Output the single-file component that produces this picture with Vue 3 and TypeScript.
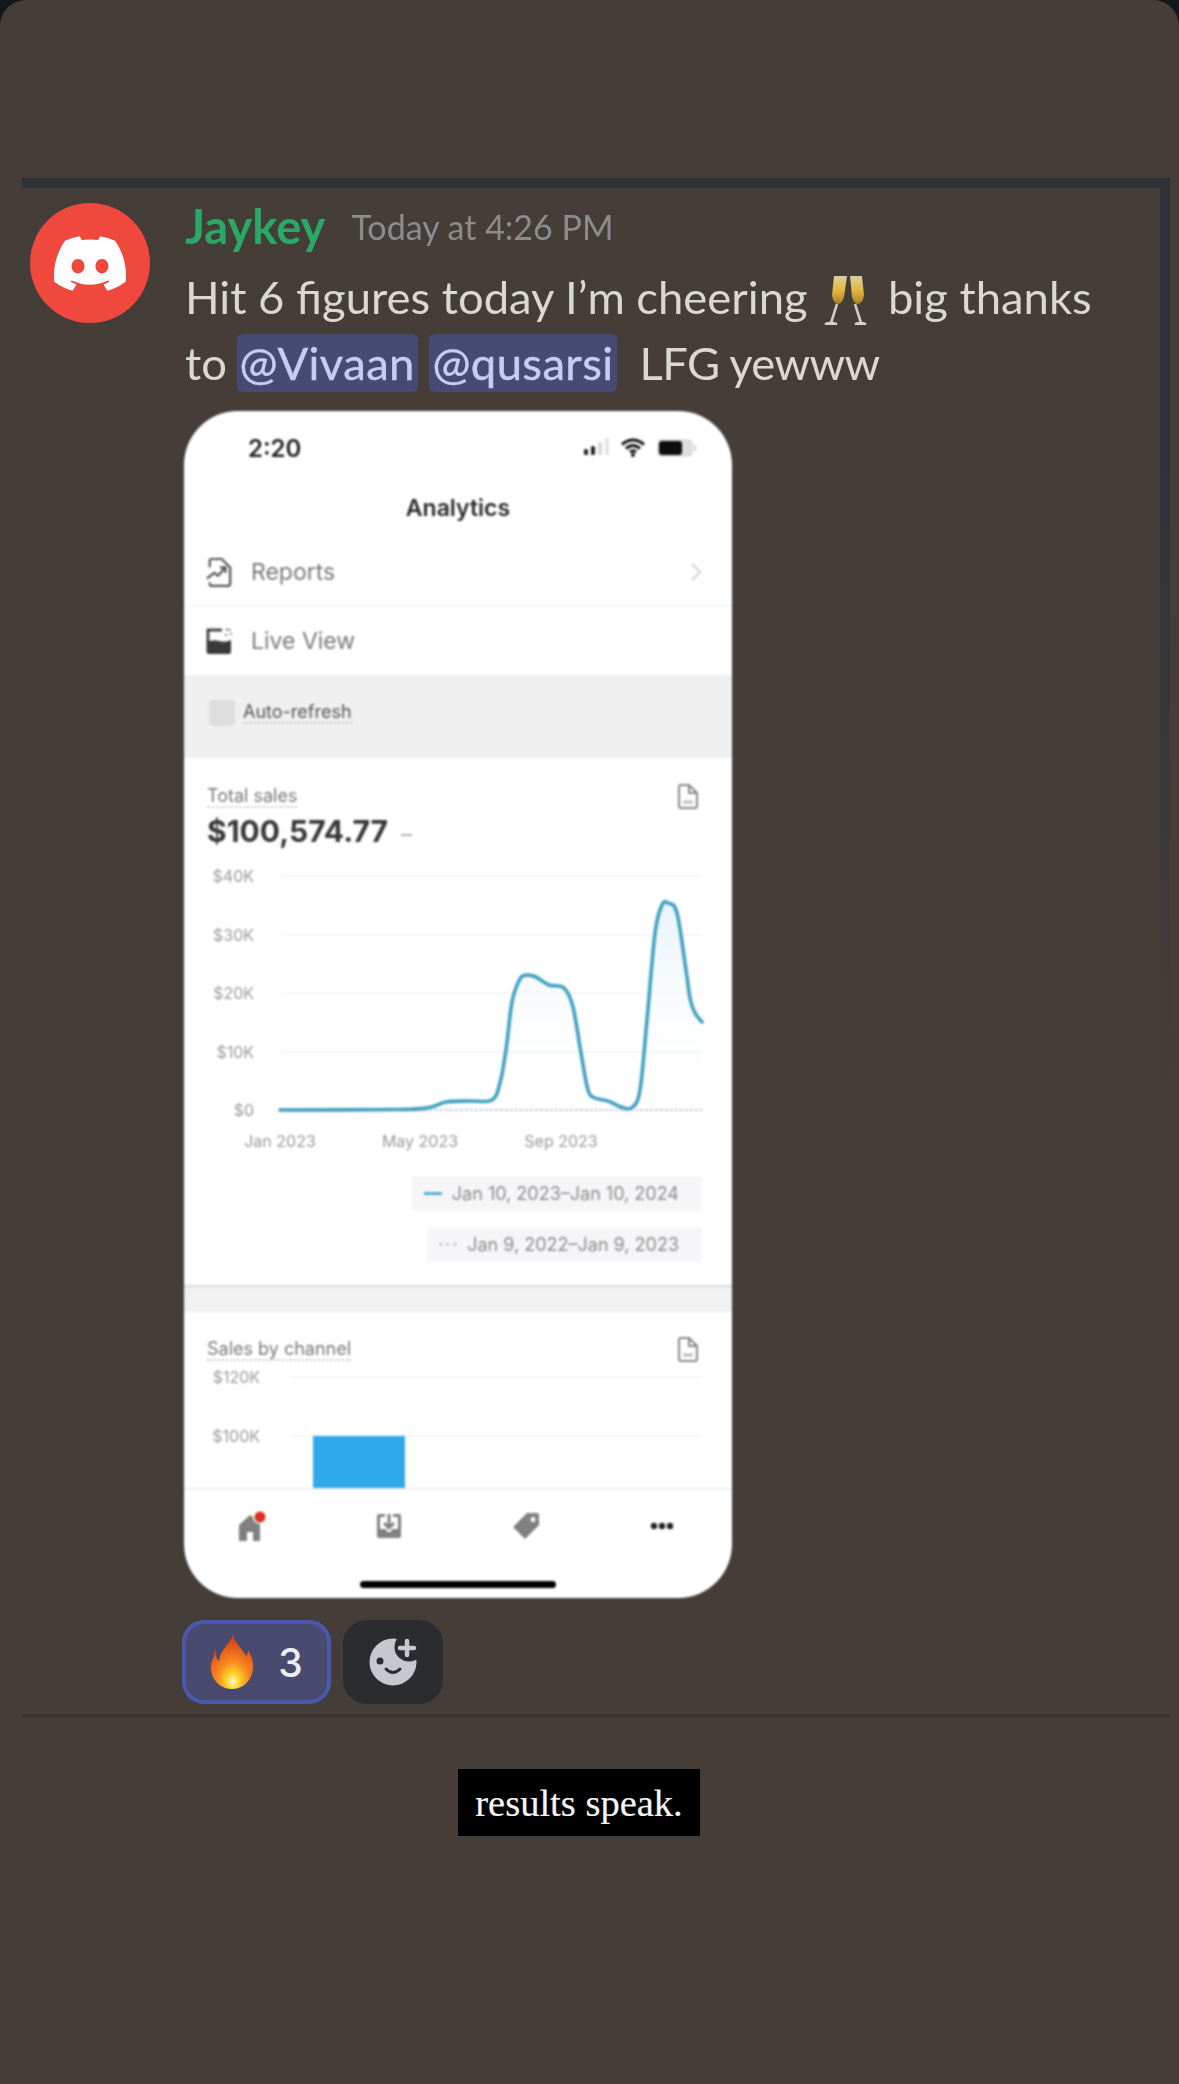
<template>
  <div class="screen">
    <div class="story">
      <div class="message">
        <div class="avatar">
          <svg width="72" height="55" viewBox="0 0 127.14 96.36">
            <path fill="#fff" d="M107.7,8.07A105.15,105.15,0,0,0,81.47,0a72.06,72.06,0,0,0-3.36,6.83A97.68,97.68,0,0,0,49,6.83,72.37,72.37,0,0,0,45.64,0,105.89,105.89,0,0,0,19.39,8.09C2.79,32.65-1.71,56.6.54,80.21h0A105.73,105.73,0,0,0,32.71,96.36,77.7,77.7,0,0,0,39.6,85.25a68.42,68.42,0,0,1-10.85-5.18c.91-.66,1.8-1.34,2.66-2a75.57,75.57,0,0,0,64.32,0c.87.71,1.76,1.39,2.66,2a68.68,68.68,0,0,1-10.87,5.19,77,77,0,0,0,6.89,11.1A105.25,105.25,0,0,0,126.6,80.22h0C129.24,52.84,122.09,29.11,107.7,8.07ZM42.45,65.69C36.18,65.69,31,60,31,53s5-12.74,11.43-12.74S54,46,53.89,53,48.84,65.69,42.45,65.69Zm42.24,0C78.41,65.69,73.25,60,73.25,53s5-12.74,11.44-12.74S96.23,46,96.12,53,91.08,65.69,84.69,65.69Z" />
          </svg>
        </div>
        <div class="body">
          <div class="meta">
            <span class="name">Jaykey</span>
            <span class="time">Today at 4:26 PM</span>
          </div>
          <div class="text">
            Hit 6 figures today I’m cheering
            <svg class="cheers" width="43" height="51" viewBox="0 0 43 51">
              <defs>
                <linearGradient id="wine" x1="0" y1="0" x2="0" y2="1">
                  <stop offset="0" stop-color="#d9cfa6" />
                  <stop offset="0.5" stop-color="#e6b73c" />
                  <stop offset="1" stop-color="#a87f2a" />
                </linearGradient>
              </defs>
              <path d="M10 1h13l-3 21q-2 7-6 7-5-1-6-9z" fill="url(#wine)" />
              <path d="M26 1h12l2 19q-1 8-6 9-4 0-6-7z" fill="url(#wine)" />
              <path d="M13 29L7 48M31 29l6 19" stroke="#cfccc5" stroke-width="2.6" fill="none" />
              <path d="M1 49q6-2.500 12 0zM31 49q6-2.500 11 0z" fill="#d6d3cc" stroke="#d6d3cc" stroke-width="2" />
            </svg>
            big thanks<br />
            to <span class="mention first">@Vivaan</span> <span class="mention">@qusarsi</span>
            <span class="tail">LFG yewww</span>
          </div>

          <div class="phone">
            <div class="status">
              <span class="clock">2:20</span>
              <svg width="112" height="24" viewBox="0 0 112 24">
                <rect x="0" y="13" width="4" height="6" rx="1.5" fill="#222" />
                <rect x="7" y="10" width="4" height="9" rx="1.5" fill="#222" />
                <rect x="14" y="6" width="4" height="13" rx="1.5" fill="#d8d8d8" />
                <rect x="21" y="2" width="4" height="17" rx="1.5" fill="#e4e4e4" />
                <path d="M38 8.500q11-9 22 0M42 12.500q7-6 14 0M46 16q3-2.500 6 0" stroke="#111" stroke-width="3" fill="none" />
                <circle cx="49" cy="19" r="2" fill="#111" />
                <rect x="73" y="3" width="36" height="18" rx="5" fill="#dedede" />
                <rect x="75" y="5" width="23" height="14" rx="3" fill="#0d0d0d" />
                <rect x="110" y="9" width="2" height="6" rx="1" fill="#ccc" />
              </svg>
            </div>
            <div class="title">Analytics</div>

            <div class="row">
              <svg width="26" height="30" viewBox="0 0 28 32" fill="none" stroke="#555" stroke-width="2.4">
                <path d="M4 11V4q0-2 2-2h11l9 9v18q0 2-2 2H6q-2 0-2-2v-2" />
                <path d="M1 23l8-6 4 3 7-8M15 11h6v6" />
              </svg>
              <span class="row-label">Reports</span>
              <svg class="chevron" width="12" height="20" viewBox="0 0 12 20" fill="none" stroke="#d4d4d4" stroke-width="2.4">
                <path d="M2 2l8 8-8 8" />
              </svg>
            </div>
            <div class="row plain">
              <svg width="26" height="28" viewBox="0 0 26 28">
                <path d="M2 26V3h14" fill="none" stroke="#444" stroke-width="3" />
                <path d="M1 15q6-3 12-1t12-1v12q0 2-2 2H3q-2 0-2-2z" fill="#3a3a3a" />
                <path d="M20 1h2v3h-2zM24 6h2v2h-2zM19 7h2v2h-2zM23 2h2v2h-2z" fill="#888" />
              </svg>
              <span class="row-label">Live View</span>
            </div>

            <div class="refresh">
              <span class="checkbox"></span>
              <span class="dotted refresh-label">Auto-refresh</span>
            </div>

            <div class="total">
              <div class="card-head">
                <span class="dotted card-title">Total sales</span>
                <svg width="20" height="25" viewBox="0 0 20 25" fill="none" stroke="#888" stroke-width="2">
                  <path d="M3 1h8l8 8v13q0 2-2 2H3q-2 0-2-2V3q0-2 2-2zM11 1v8h8" />
                  <path d="M5 18h10" stroke-width="3" stroke="#bbb" />
                </svg>
              </div>
              <div class="amount">$100,574.77 <span class="amount-dash">–</span></div>
              <svg class="plot" width="548" height="310" viewBox="184 851 548 310">
                <defs>
                  <linearGradient id="area" x1="0" y1="0" x2="0" y2="1">
                    <stop offset="0" stop-color="#e3f1f7" stop-opacity="0.8" />
                    <stop offset="1" stop-color="#ffffff" stop-opacity="0" />
                  </linearGradient>
                </defs>
                <g v-for="tick in salesTicks" :key="tick.label">
                  <line x1="280" x2="702" :y1="tick.y" :y2="tick.y" stroke="#f2f2f2" stroke-width="1.5" />
                  <text x="254" :y="tick.y + 6" text-anchor="end" class="axis">{{ tick.label }}</text>
                </g>
                <text v-for="m in months" :key="m.label" :x="m.x" y="1147" text-anchor="middle" class="axis">{{ m.label }}</text>
                <path :d="areaPath" fill="url(#area)" />
                <line x1="280" x2="702" y1="1110" y2="1110" stroke="#c9d3ea" stroke-width="2.5" stroke-dasharray="2.500 2.500" />
                <path :d="linePath" fill="none" stroke="#3f9fc2" stroke-width="3.6" stroke-linejoin="round" stroke-linecap="round" />
              </svg>
              <div class="legend">
                <div class="legend-item">
                  <span class="swatch solid"></span>
                  Jan 10, 2023–Jan 10, 2024
                </div>
                <div class="legend-item">
                  <span class="swatch dots"></span>
                  Jan 9, 2022–Jan 9, 2023
                </div>
              </div>
            </div>

            <div class="gap"></div>

            <div class="channel">
              <div class="card-head">
                <span class="dotted card-title">Sales by channel</span>
                <svg width="20" height="25" viewBox="0 0 20 25" fill="none" stroke="#888" stroke-width="2">
                  <path d="M3 1h8l8 8v13q0 2-2 2H3q-2 0-2-2V3q0-2 2-2zM11 1v8h8" />
                  <path d="M5 18h10" stroke-width="3" stroke="#bbb" />
                </svg>
              </div>
              <svg class="plot" width="548" height="127" viewBox="184 1361 548 127">
                <line x1="290" x2="702" y1="1376" y2="1376" stroke="#f2f2f2" stroke-width="1.5" />
                <line x1="290" x2="702" y1="1435" y2="1435" stroke="#f2f2f2" stroke-width="1.5" />
                <text x="260" y="1382" text-anchor="end" class="axis">$120K</text>
                <text x="260" y="1441" text-anchor="end" class="axis">$100K</text>
                <rect x="313" y="1435" width="92" height="53" fill="#2fa9ec" />
              </svg>
            </div>

            <div class="tabs">
              <div class="tab-icons">
                <svg width="28" height="32" viewBox="0 0 28 32">
                  <path d="M1 15L12 5l10 7v19h-7v-9H9v9H1z" fill="#808080" />
                  <circle cx="22" cy="7" r="7" fill="#fff" />
                  <circle cx="22" cy="7" r="5.500" fill="#d8301f" />
                </svg>
                <svg width="26" height="26" viewBox="0 0 26 26">
                  <path d="M1 3q0-2 2-2h6v3H4v12h6l1 3h4l1-3h6V4h-5V1h6q2 0 2 2v20q0 2-2 2H3q-2 0-2-2z" fill="#808080" />
                  <path d="M13 1v13M8 10l5 5 5-5" stroke="#808080" stroke-width="3" fill="none" />
                </svg>
                <svg width="27" height="27" viewBox="0 0 27 27">
                  <path d="M14 1h10q2 0 2 2v10L13 26q-1 1-2 0L1 16q-1-1 0-2zM20 5a2.500 2.500 0 1 0 .01 0z" fill="#808080" fill-rule="evenodd" />
                </svg>
                <svg width="24" height="8" viewBox="0 0 24 8">
                  <circle cx="4" cy="4" r="3.200" fill="#222" />
                  <circle cx="12" cy="4" r="3.200" fill="#222" />
                  <circle cx="20" cy="4" r="3.200" fill="#222" />
                </svg>
              </div>
              <div class="home-bar"></div>
            </div>
          </div>

          <div class="reactions">
            <div class="reaction mine">
              <svg width="44" height="56" viewBox="0 0 44 56">
                <defs>
                  <radialGradient id="flame" cx="0.52" cy="0.86" r="0.8">
                    <stop offset="0" stop-color="#fff8c8" />
                    <stop offset="0.18" stop-color="#fdd62e" />
                    <stop offset="0.45" stop-color="#f98a1e" />
                    <stop offset="1" stop-color="#dd3d16" />
                  </radialGradient>
                </defs>
                <path d="M23 1c2 9 9 13 13 21 2-2 2-4 2-6 4 6 6 13 5 20-2 12-11 19-21 19S3 48 1 37C0 30 3 24 6 19c0 4 1 7 3 8 1-11 10-16 14-26z" fill="url(#flame)" />
                <path d="M5 14c0 3-2 5-2 8l3-2c0-2 0-4-1-6z" fill="#c8431a" />
              </svg>
              <span class="count">3</span>
            </div>
            <div class="reaction add">
              <svg width="100" height="84" viewBox="0 0 100 84">
                <circle cx="50" cy="42" r="23.500" fill="#c6c8cd" />
                <circle cx="66" cy="27" r="14.500" fill="#2b2c30" />
                <path d="M64 21v14M57 28h14" stroke="#c6c8cd" stroke-width="4.500" stroke-linecap="round" />
                <circle cx="37" cy="41" r="3.500" fill="#2b2c30" />
                <path d="M43 49q7 7 14 0" stroke="#2b2c30" stroke-width="3" fill="none" stroke-linecap="round" />
              </svg>
            </div>
          </div>
        </div>
      </div>

      <div class="caption">results speak.</div>
    </div>
  </div>
</template>

<script setup lang="ts">
// curve traced from the shot, page coordinates
const curve: Array<[number, number]> = [
  [280, 1110], [400, 1109.5], [429, 1107.5], [446, 1102], [470, 1101], [492, 1100],
  [500, 1083], [506, 1050], [512, 1002], [520, 979], [527, 975], [536, 977], [549, 985],
  [564, 988], [573, 1007], [581, 1053], [588, 1090], [595, 1098], [608, 1101],
  [621, 1107], [632, 1107.5], [640, 1090], [647, 1020], [655, 933], [662, 905],
  [668, 903], [677, 913], [686, 970], [690, 998], [695, 1013], [702, 1022],
]

const smooth = (pts: Array<[number, number]>) => {
  let d = `M${pts[0][0]} ${pts[0][1]}`
  for (let i = 0; i < pts.length - 1; i++) {
    const p0 = pts[Math.max(i - 1, 0)]
    const p1 = pts[i]
    const p2 = pts[i + 1]
    const p3 = pts[Math.min(i + 2, pts.length - 1)]
    const c1x = p1[0] + (p2[0] - p0[0]) / 6
    const c1y = p1[1] + (p2[1] - p0[1]) / 6
    const c2x = p2[0] - (p3[0] - p1[0]) / 6
    const c2y = p2[1] - (p3[1] - p1[1]) / 6
    d += `C${c1x.toFixed(1)} ${c1y.toFixed(1)} ${c2x.toFixed(1)} ${c2y.toFixed(1)} ${p2[0]} ${p2[1]}`
  }
  return d
}

const linePath = smooth(curve)
const areaPath = `${linePath}L702 1110L280 1110Z`

const salesTicks = [
  { label: '$40K', y: 876 },
  { label: '$30K', y: 935 },
  { label: '$20K', y: 993 },
  { label: '$10K', y: 1052 },
  { label: '$0', y: 1110 },
]

const months = [
  { label: 'Jan 2023', x: 280 },
  { label: 'May 2023', x: 420 },
  { label: 'Sep 2023', x: 561 },
]
</script>

<style>
html,
body {
  margin: 0;
  background: #12181c;
}
</style>

<style scoped>
.screen {
  width: 1179px;
  height: 2084px;
  background: #12181c;
  overflow: hidden;
}

.story {
  height: 2084px;
  box-sizing: border-box;
  padding-top: 178px;
  background: #453d37;
  border-radius: 26px 26px 0 0;
  font-family: Lato, "Noto Sans", sans-serif;
}

.message {
  position: relative;
  display: flex;
  margin-left: 22px;
  width: 1148px;
  box-sizing: border-box;
  height: 1539px;
  padding-top: 15px;
  padding-left: 8px;
  border-top: 10px solid #30323a;
  border-bottom: 3px solid #383532;
}

.message::after {
  content: "";
  position: absolute;
  top: 0;
  right: 0;
  width: 10px;
  height: 900px;
  background: linear-gradient(#30323a, #30323a 30%, rgba(48, 50, 58, 0));
}

.avatar {
  flex: none;
  width: 120px;
  height: 120px;
  border-radius: 50%;
  background: #f0483c;
  display: flex;
  align-items: center;
  justify-content: center;
  filter: blur(0.6px);
}

.body {
  margin-left: 35px;
}

.meta {
  height: 46px;
  display: flex;
  align-items: center;
  gap: 26px;
  white-space: nowrap;
  filter: blur(0.5px);
}

.name {
  color: #2aa867;
  font-size: 47px;
  font-weight: 700;
}

.time {
  color: #8b8d8c;
  font-size: 34px;
}

.text {
  margin-top: 15px;
  color: #d9d8d2;
  font-size: 45.4px;
  line-height: 66px;
  white-space: nowrap;
  filter: blur(0.5px);
}

.cheers {
  vertical-align: -12px;
  margin: 0 9px 0 5px;
}

.mention {
  display: inline-block;
  height: 58px;
  line-height: 58px;
  padding: 0 3px;
  border-radius: 6px;
  background: #474b73;
  color: #c5cdf5;
  letter-spacing: 0.4px;
  -webkit-text-stroke: 0.4px #c5cdf5;
}

.first {
  margin-left: -2px;
}

.tail {
  margin-left: 23px;
  letter-spacing: -0.65px;
}

.phone {
  margin-top: 15px;
  width: 548px;
  height: 1187px;
  margin-left: -1px;
  display: flex;
  flex-direction: column;
  overflow: hidden;
  background: #fff;
  border-radius: 54px;
  font-family: Inter, "Noto Sans", sans-serif;
  filter: blur(0.9px);
}

.status {
  flex: none;
  height: 74px;
  box-sizing: border-box;
  padding: 0 36px 0 64px;
  display: flex;
  align-items: center;
  justify-content: space-between;
}

.clock {
  font-size: 24px;
  font-weight: 600;
  color: #222;
}

.title {
  flex: none;
  height: 46px;
  margin-bottom: 8px;
  line-height: 46px;
  text-align: center;
  font-size: 23px;
  font-weight: 600;
  color: #2a2a2a;
}

.row {
  flex: none;
  height: 68px;
  box-sizing: border-box;
  padding: 0 30px 0 22px;
  display: flex;
  align-items: center;
  gap: 19px;
  border-bottom: 2px solid #f5f5f5;
}

.plain {
  border-bottom: none;
}

.row-label {
  font-size: 23px;
  color: #7a7a7a;
}

.chevron {
  margin-left: auto;
}

.refresh {
  flex: none;
  height: 83px;
  box-sizing: border-box;
  padding: 0 25px 8px;
  display: flex;
  align-items: center;
  gap: 8px;
  background: #f0f0f0;
}

.checkbox {
  width: 26px;
  height: 26px;
  border-radius: 4px;
  background: #dedede;
}

.dotted {
  border-bottom: 2px dotted #c8c8c8;
}

.refresh-label {
  font-size: 18px;
  color: #555;
}

.total {
  flex: none;
  height: 527px;
  box-sizing: border-box;
  padding-top: 25px;
}

.card-head {
  height: 26px;
  padding: 0 34px 0 23px;
  display: flex;
  align-items: center;
  justify-content: space-between;
}

.card-title {
  font-size: 18px;
  color: #777;
}

.amount {
  height: 38px;
  line-height: 38px;
  margin-top: 3px;
  margin-bottom: 1px;
  padding-left: 23px;
  font-size: 30px;
  font-weight: 700;
  color: #383838;
}

.amount-dash {
  margin-left: 6px;
  font-size: 22px;
  font-weight: 400;
  color: #aaa;
}

.plot {
  display: block;
}

.axis {
  font-family: Inter, "Noto Sans", sans-serif;
  font-size: 16px;
  fill: #9a9a9a;
}

.legend {
  margin-top: 15px;
  padding-right: 30px;
  display: flex;
  flex-direction: column;
  align-items: flex-end;
  gap: 16px;
}

.legend-item {
  height: 35px;
  padding: 0 23px 0 12px;
  display: flex;
  align-items: center;
  gap: 10px;
  background: #f6f6f8;
  font-size: 18px;
  color: #8c8c8c;
}

.swatch {
  width: 18px;
}

.solid {
  height: 3px;
  background: #56afcf;
}

.dots {
  border-top: 3px dotted #c9d3ea;
}

.gap {
  flex: none;
  height: 27px;
  box-sizing: border-box;
  background: #f1f1f1;
  border-top: 2px solid #dcdcdc;
}

.channel {
  flex: none;
  height: 176px;
  box-sizing: border-box;
  padding-top: 24px;
  overflow: hidden;
}

.tabs {
  flex: 1;
  border-top: 2px solid #f0f0f0;
  display: flex;
  flex-direction: column;
  align-items: center;
}

.tab-icons {
  width: 100%;
  box-sizing: border-box;
  height: 71px;
  padding: 0 58px 0 54px;
  display: flex;
  align-items: center;
  justify-content: space-between;
}

.home-bar {
  margin-top: 20px;
  width: 196px;
  height: 7px;
  border-radius: 4px;
  background: #000;
}

.reactions {
  display: flex;
  gap: 12px;
  margin-top: 22px;
  margin-left: -3px;
}

.reaction {
  height: 84px;
  box-sizing: border-box;
  display: flex;
  align-items: center;
  justify-content: center;
}

.mine {
  width: 149px;
  gap: 24px;
  border: 4px solid #4a58b0;
  border-radius: 22px;
  background: #4a4a6e;
}

.count {
  font-family: Inter, sans-serif;
  font-size: 39px;
  font-weight: 500;
  color: #eceef5;
}

.add {
  width: 100px;
  border-radius: 24px;
  background: #2b2c30;
}

.caption {
  margin: 52px 0 0 458px;
  width: 242px;
  height: 67px;
  line-height: 69px;
  text-align: center;
  background: #000;
  color: #f4f4f4;
  font-family: "Liberation Serif", serif;
  font-size: 38.5px;
  -webkit-text-stroke: 0.2px #f4f4f4;
}
</style>
